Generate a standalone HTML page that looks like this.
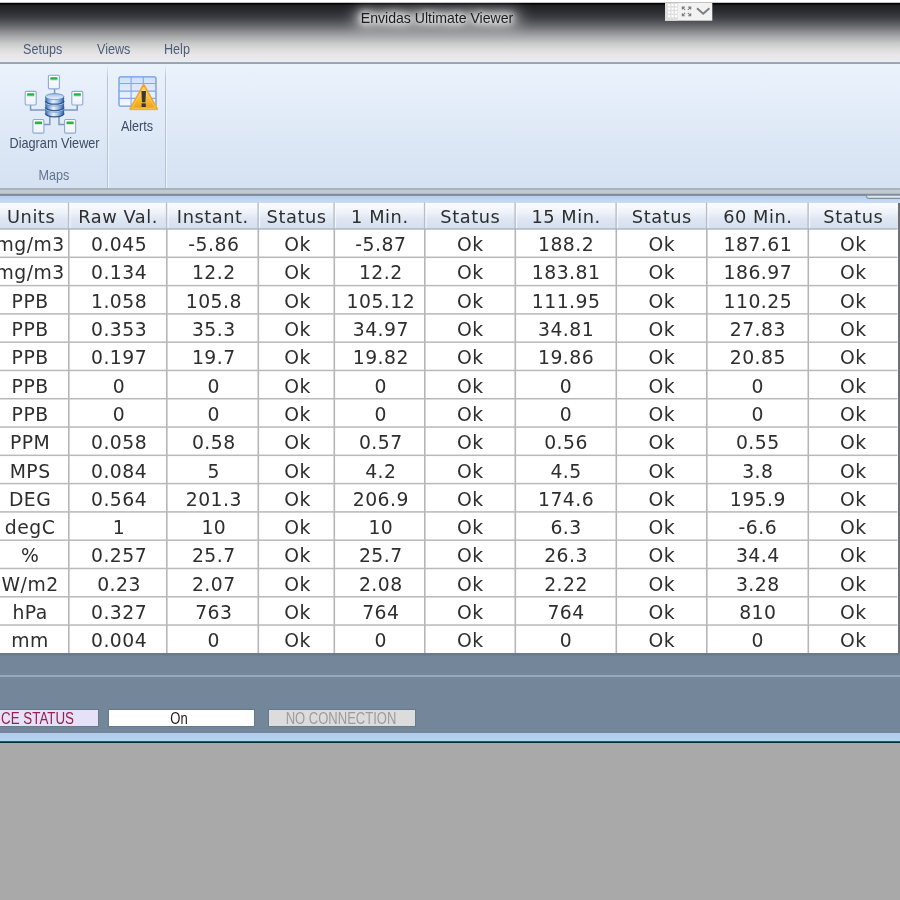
<!DOCTYPE html>
<html><head><meta charset="utf-8"><title>Envidas Ultimate Viewer</title>
<style>
html,body{margin:0;padding:0;}
body{width:900px;height:900px;overflow:hidden;position:relative;background:#a9a9a9;font-family:"Liberation Sans",sans-serif;}
.abs{position:absolute;}
.soft{filter:blur(.45px);}
#title{left:0;top:0;width:900px;height:62px;background:linear-gradient(to bottom,#ffffff 0px,#ffffff 2.4px,#050505 2.8px,#050505 4px,#1f2125 5.5px,#2a2c30 11px,#383b40 16.7px,#4b4e52 21px,#6a6c70 26.5px,#8a8c8e 31.5px,#a9aaab 37px,#c6c7c7 43px,#dadbdb 49px,#e7e6e9 55px,#ebeaee 62px);}
#ttext{left:337px;top:9px;width:200px;text-align:center;font-size:14.1px;line-height:18px;color:#1c1c1c;white-space:nowrap;text-shadow:0 0 5px rgba(255,255,255,.9),0 0 8px rgba(255,255,255,.85),0 0 10px rgba(255,255,255,.8),0 0 12px rgba(255,255,255,.7),0 0 14px rgba(255,255,255,.6);}
.menu{top:40.6px;font-size:14.4px;line-height:16px;color:#4c5b78;white-space:nowrap;transform-origin:0 0;transform:scaleX(.875);}
#ribbon{left:0;top:62px;width:900px;height:126px;background:linear-gradient(to bottom,#eeeef0 0,#9aa9ba .5px,#94a4b6 1.7px,#eaf2fc 2.4px,#e4edf9 40px,#d9e5f4 100px,#d5e2f2 126px);}
.rl{font-size:14.6px;line-height:16px;color:#3d4b66;white-space:nowrap;text-align:center;transform:scaleX(.864);margin-top:-.7px}
.sep{top:64px;height:124px;width:1px;background:linear-gradient(to bottom,rgba(182,195,212,0),#b6c3d4 14px);}
.seph{top:64px;height:124px;width:1px;background:linear-gradient(to bottom,rgba(238,244,252,0),#eef4fc 14px);}
#band1{left:0;top:187.7px;width:900px;height:8px;background:linear-gradient(to bottom,#a9b2bd 0,#a9b2bd 2px,#c3c9d1 2.3px,#c3c9d1 5.4px,#7f8e9d 5.8px,#7f8e9d 8px);}
#band2{left:0;top:195.7px;width:900px;height:7px;background:linear-gradient(to bottom,#b7cfed,#c9dcf3);}
#thead{left:0;top:202.5px;width:897.5px;height:26.7px;background:linear-gradient(to bottom,#fafcfe 0,#eef3fa 35%,#dfe7f3 60%,#d3deee 100%);}
#tbody{left:0;top:229.0px;width:897.5px;height:424.4px;background:#fff;}
.c{position:absolute;text-align:center;font-family:"DejaVu Sans","Liberation Sans",sans-serif;font-size:18.8px;letter-spacing:.5px;line-height:28.29px;height:28.29px;color:#2e2e2e;white-space:nowrap;}
.h{position:absolute;text-align:center;font-family:"DejaVu Sans","Liberation Sans",sans-serif;font-size:17.8px;letter-spacing:.55px;line-height:26.7px;height:26.7px;color:#2e2e2e;white-space:nowrap;}
.vl{position:absolute;width:1.2px;background:#b9b9b9;}
.hl{position:absolute;left:0;width:897.5px;height:1.2px;background:#c4c4c4;}
#status{left:0;top:653.2px;width:900px;height:79.8px;background:linear-gradient(to bottom,#6a7a8b 0,#6a7a8b 2.3px,#74879a 2.8px);}
#sline{left:0;top:675.2px;width:900px;height:1.4px;background:#9aabbb;}
.sb{top:709.9px;height:15.8px;box-shadow:0 0 0 1px #677a8d;}
.st{top:708.6px;font-size:16.3px;line-height:18px;white-space:nowrap;}
#band3{left:0;top:733px;width:900px;height:7.9px;background:linear-gradient(to bottom,#b5cbeb,#aed6ef);}
#band4{left:0;top:740.7px;width:900px;height:2px;background:linear-gradient(to bottom,#1b7f90,#06303c 60%,#0a2a30);}
</style></head><body>

<div id="title" class="abs"></div>
<div class="abs" style="left:352px;top:8px;width:170px;height:20px;border-radius:10px;background:rgba(255,255,255,.38);filter:blur(7px)"></div>
<div id="ttext" class="abs soft">Envidas Ultimate Viewer</div>
<svg class="abs" style="left:665px;top:2.6px" width="48" height="18" viewBox="0 0 48 18">
<rect x="0" y="0" width="47.3" height="17.7" fill="#f2f2f2"/>
<rect x="0" y="0" width="12.8" height="17.7" fill="#dedede"/>
<g fill="#ffffff">
<rect x="3.0" y="1.0" width="2.2" height="2.2"/>
<rect x="3.0" y="4.6" width="2.2" height="2.2"/>
<rect x="3.0" y="8.3" width="2.2" height="2.2"/>
<rect x="3.0" y="12.1" width="2.2" height="2.2"/>
<rect x="6.5" y="1.0" width="2.2" height="2.2"/>
<rect x="6.5" y="4.6" width="2.2" height="2.2"/>
<rect x="6.5" y="8.3" width="2.2" height="2.2"/>
<rect x="6.5" y="12.1" width="2.2" height="2.2"/>
<rect x="9.9" y="1.0" width="2.2" height="2.2"/>
<rect x="9.9" y="4.6" width="2.2" height="2.2"/>
<rect x="9.9" y="8.3" width="2.2" height="2.2"/>
<rect x="9.9" y="12.1" width="2.2" height="2.2"/>
</g>
<g stroke="#7a7a7a" stroke-width="1.05" fill="none">
<path d="M20.2 7.0 L17.5 4.3 M17.3 6.6 V4.1 H19.8"/>
<path d="M22.8 7.0 L25.5 4.3 M25.7 6.6 V4.1 H23.2"/>
<path d="M20.2 9.8 L17.5 12.5 M17.3 10.2 V12.7 H19.8"/>
<path d="M22.8 9.8 L25.5 12.5 M25.7 10.2 V12.7 H23.2"/>
</g>
<path d="M32 5.2 L38.2 10.8 L44.4 5.2" stroke="#7d7d7d" stroke-width="1.9" fill="none"/>
</svg>
<div class="abs menu soft" style="left:22.5px">Setups</div>
<div class="abs menu soft" style="left:96.5px">Views</div>
<div class="abs menu soft" style="left:164px">Help</div>
<div id="ribbon" class="abs"></div>
<div class="abs sep" style="left:107px"></div><div class="abs seph" style="left:108px"></div>
<div class="abs sep" style="left:165px"></div><div class="abs seph" style="left:166px"></div>
<svg class="abs soft" style="left:0;top:62px" width="200" height="126" viewBox="0 62 200 126">
<defs>
<linearGradient id="dg" x1="0" x2="0" y1="0" y2="1"><stop offset="0" stop-color="#ffffff"/><stop offset="1" stop-color="#edf2f8"/></linearGradient>
<linearGradient id="cy" x1="0" x2="1" y1="0" y2="0"><stop offset="0" stop-color="#2f5f9f"/><stop offset=".14" stop-color="#6d99d2"/><stop offset=".42" stop-color="#e9f2fc"/><stop offset=".62" stop-color="#b4cfee"/><stop offset=".86" stop-color="#5b89c6"/><stop offset="1" stop-color="#2a5590"/></linearGradient>
<linearGradient id="cyt" x1="0" x2="0" y1="0" y2="1"><stop offset="0" stop-color="#9cbde6"/><stop offset="1" stop-color="#f2f7fd"/></linearGradient>
<linearGradient id="tri" x1="0" x2="0" y1="0" y2="1"><stop offset="0" stop-color="#fbe08a"/><stop offset=".45" stop-color="#f9c445"/><stop offset="1" stop-color="#eea016"/></linearGradient>
<linearGradient id="cell" x1="0" x2="0" y1="0" y2="1"><stop offset="0" stop-color="#cfe0f8"/><stop offset="1" stop-color="#f4f9ff"/></linearGradient>
</defs>
<g stroke="#7b98bf" stroke-width="1.5" fill="none"><path d="M54.6 89 V95"/><path d="M30.6 105 V110 H46"/><path d="M77.2 105 V110 H63"/><path d="M49.8 116 V124.4 H44"/><path d="M59.0 116 V124.4 H64.4"/></g>
<rect x="48.4" y="75.3" width="11" height="13.6" rx="1.2" fill="url(#dg)" stroke="#8ea9cf" stroke-width="1.1"/><rect x="50.3" y="77.2" width="7.2" height="2.5" rx=".5" fill="#2db045"/><rect x="50.3" y="79.9" width="7.2" height=".9" fill="#c9ecce"/><rect x="25.2" y="91.4" width="11" height="13.6" rx="1.2" fill="url(#dg)" stroke="#8ea9cf" stroke-width="1.1"/><rect x="27.1" y="93.3" width="7.2" height="2.5" rx=".5" fill="#2db045"/><rect x="27.1" y="96.0" width="7.2" height=".9" fill="#c9ecce"/><rect x="71.8" y="91.4" width="11" height="13.6" rx="1.2" fill="url(#dg)" stroke="#8ea9cf" stroke-width="1.1"/><rect x="73.7" y="93.3" width="7.2" height="2.5" rx=".5" fill="#2db045"/><rect x="73.7" y="96.0" width="7.2" height=".9" fill="#c9ecce"/><rect x="32.9" y="119.5" width="11" height="13.6" rx="1.2" fill="url(#dg)" stroke="#8ea9cf" stroke-width="1.1"/><rect x="34.8" y="121.4" width="7.2" height="2.5" rx=".5" fill="#2db045"/><rect x="34.8" y="124.1" width="7.2" height=".9" fill="#c9ecce"/><rect x="64.6" y="119.5" width="11" height="13.6" rx="1.2" fill="url(#dg)" stroke="#8ea9cf" stroke-width="1.1"/><rect x="66.5" y="121.4" width="7.2" height="2.5" rx=".5" fill="#2db045"/><rect x="66.5" y="124.1" width="7.2" height=".9" fill="#c9ecce"/>
<path d="M45.3 109.2 V113.8 A9.4 3.2 0 0 0 64.1 113.8 V109.2 Z" fill="url(#cy)"/>
<path d="M45.3 113.6 A9.4 3.2 0 0 0 64.1 113.6" fill="none" stroke="#234a82" stroke-width="1.3" opacity=".9"/>
<ellipse cx="54.7" cy="109.2" rx="9.1" ry="3.0" fill="url(#cyt)" stroke="#5582be" stroke-width=".7"/>
<path d="M45.3 103.0 V107.6 A9.4 3.2 0 0 0 64.1 107.6 V103.0 Z" fill="url(#cy)"/>
<path d="M45.3 107.4 A9.4 3.2 0 0 0 64.1 107.4" fill="none" stroke="#234a82" stroke-width="1.3" opacity=".9"/>
<ellipse cx="54.7" cy="103.0" rx="9.1" ry="3.0" fill="url(#cyt)" stroke="#5582be" stroke-width=".7"/>
<path d="M45.3 96.6 V101.2 A9.4 3.2 0 0 0 64.1 101.2 V96.6 Z" fill="url(#cy)"/>
<path d="M45.3 101.0 A9.4 3.2 0 0 0 64.1 101.0" fill="none" stroke="#234a82" stroke-width="1.3" opacity=".9"/>
<ellipse cx="54.7" cy="96.6" rx="9.1" ry="3.0" fill="url(#cyt)" stroke="#5582be" stroke-width=".7"/>
<rect x="119" y="76.8" width="37" height="29.4" rx="1.5" fill="url(#cell)" stroke="#6c9be0" stroke-width="1.3"/>
<g stroke="#7fa8e6" stroke-width="1.1"><path d="M131.1 76.8 V106.2 M143.3 76.8 V106.2 M119 83.5 H156 M119 91.1 H156 M119 98.4 H156"/></g>
<path d="M142.6 85.2 Q143.7 83.4 144.8 85.2 L157.6 108.4 Q158.2 109.8 156.8 109.8 H130.6 Q129.2 109.8 129.8 108.4 Z" fill="#f0a01c" stroke="#f2a82e" stroke-width=".6" stroke-linejoin="round"/>
<path d="M143.7 87 L155.6 108.2 H131.8 Z" fill="url(#tri)" stroke="#fbd36a" stroke-width=".8" stroke-linejoin="round"/>
<path d="M141.4 91 H146 L145.4 102.2 H142 Z" fill="#3b3733"/><rect x="141.6" y="103.4" width="4.2" height="3.6" fill="#3b3733"/>
</svg>
<div class="abs rl soft" style="left:3.4px;top:136px;width:100px;transform:scaleX(.87)">Diagram Viewer</div>
<div class="abs rl soft" style="left:107px;top:118.5px;width:60px">Alerts</div>
<div class="abs rl soft" style="left:24px;top:167.5px;width:60px;color:#62748f">Maps</div>
<div id="band1" class="abs"></div><div id="band2" class="abs"></div>
<svg class="abs" style="left:860px;top:190px" width="40" height="14" viewBox="860 190 40 14"><path d="M866.6 195.7 V196.6 Q866.6 198.4 868.6 198.4 H900 V195.7 Z" fill="#dfe7f1"/><path d="M866.6 195.7 V196.6 Q866.6 198.4 868.6 198.4 H900" fill="none" stroke="#8190a1" stroke-width="1.1"/></svg>
<div class="abs" style="left:897.3px;top:202.6px;width:2.7px;height:451px;background:linear-gradient(to right,#f3f6fa 0,#f3f6fa 1.2px,#6e7074 1.5px)"></div>
<div id="thead" class="abs"></div><div id="tbody" class="abs"></div>
<div class="abs soft" style="left:0;top:0;width:900px;height:900px">
<div class="h" style="left:-6.9px;top:203.7px;width:76.0px">Units</div>
<div class="h" style="left:69.1px;top:203.7px;width:98.0px">Raw Val.</div>
<div class="h" style="left:167.1px;top:203.7px;width:91.5px">Instant.</div>
<div class="h" style="left:258.6px;top:203.7px;width:76.0px">Status</div>
<div class="h" style="left:334.6px;top:203.7px;width:90.5px">1 Min.</div>
<div class="h" style="left:425.1px;top:203.7px;width:90.5px">Status</div>
<div class="h" style="left:515.6px;top:203.7px;width:101.0px">15 Min.</div>
<div class="h" style="left:616.6px;top:203.7px;width:90.5px">Status</div>
<div class="h" style="left:707.1px;top:203.7px;width:101.5px">60 Min.</div>
<div class="h" style="left:808.6px;top:203.7px;width:89.5px">Status</div>
<div class="c" style="left:-7.9px;top:231.20px;width:76.0px">mg/m3</div>
<div class="c" style="left:70.1px;top:231.20px;width:98.0px">0.045</div>
<div class="c" style="left:168.1px;top:231.20px;width:91.5px">-5.86</div>
<div class="c" style="left:259.6px;top:231.20px;width:76.0px">Ok</div>
<div class="c" style="left:335.6px;top:231.20px;width:90.5px">-5.87</div>
<div class="c" style="left:425.1px;top:231.20px;width:90.5px">Ok</div>
<div class="c" style="left:515.6px;top:231.20px;width:101.0px">188.2</div>
<div class="c" style="left:616.6px;top:231.20px;width:90.5px">Ok</div>
<div class="c" style="left:707.1px;top:231.20px;width:101.5px">187.61</div>
<div class="c" style="left:808.6px;top:231.20px;width:89.5px">Ok</div>
<div class="c" style="left:-7.9px;top:259.49px;width:76.0px">mg/m3</div>
<div class="c" style="left:70.1px;top:259.49px;width:98.0px">0.134</div>
<div class="c" style="left:168.1px;top:259.49px;width:91.5px">12.2</div>
<div class="c" style="left:259.6px;top:259.49px;width:76.0px">Ok</div>
<div class="c" style="left:335.6px;top:259.49px;width:90.5px">12.2</div>
<div class="c" style="left:425.1px;top:259.49px;width:90.5px">Ok</div>
<div class="c" style="left:515.6px;top:259.49px;width:101.0px">183.81</div>
<div class="c" style="left:616.6px;top:259.49px;width:90.5px">Ok</div>
<div class="c" style="left:707.1px;top:259.49px;width:101.5px">186.97</div>
<div class="c" style="left:808.6px;top:259.49px;width:89.5px">Ok</div>
<div class="c" style="left:-7.9px;top:287.78px;width:76.0px">PPB</div>
<div class="c" style="left:70.1px;top:287.78px;width:98.0px">1.058</div>
<div class="c" style="left:168.1px;top:287.78px;width:91.5px">105.8</div>
<div class="c" style="left:259.6px;top:287.78px;width:76.0px">Ok</div>
<div class="c" style="left:335.6px;top:287.78px;width:90.5px">105.12</div>
<div class="c" style="left:425.1px;top:287.78px;width:90.5px">Ok</div>
<div class="c" style="left:515.6px;top:287.78px;width:101.0px">111.95</div>
<div class="c" style="left:616.6px;top:287.78px;width:90.5px">Ok</div>
<div class="c" style="left:707.1px;top:287.78px;width:101.5px">110.25</div>
<div class="c" style="left:808.6px;top:287.78px;width:89.5px">Ok</div>
<div class="c" style="left:-7.9px;top:316.07px;width:76.0px">PPB</div>
<div class="c" style="left:70.1px;top:316.07px;width:98.0px">0.353</div>
<div class="c" style="left:168.1px;top:316.07px;width:91.5px">35.3</div>
<div class="c" style="left:259.6px;top:316.07px;width:76.0px">Ok</div>
<div class="c" style="left:335.6px;top:316.07px;width:90.5px">34.97</div>
<div class="c" style="left:425.1px;top:316.07px;width:90.5px">Ok</div>
<div class="c" style="left:515.6px;top:316.07px;width:101.0px">34.81</div>
<div class="c" style="left:616.6px;top:316.07px;width:90.5px">Ok</div>
<div class="c" style="left:707.1px;top:316.07px;width:101.5px">27.83</div>
<div class="c" style="left:808.6px;top:316.07px;width:89.5px">Ok</div>
<div class="c" style="left:-7.9px;top:344.36px;width:76.0px">PPB</div>
<div class="c" style="left:70.1px;top:344.36px;width:98.0px">0.197</div>
<div class="c" style="left:168.1px;top:344.36px;width:91.5px">19.7</div>
<div class="c" style="left:259.6px;top:344.36px;width:76.0px">Ok</div>
<div class="c" style="left:335.6px;top:344.36px;width:90.5px">19.82</div>
<div class="c" style="left:425.1px;top:344.36px;width:90.5px">Ok</div>
<div class="c" style="left:515.6px;top:344.36px;width:101.0px">19.86</div>
<div class="c" style="left:616.6px;top:344.36px;width:90.5px">Ok</div>
<div class="c" style="left:707.1px;top:344.36px;width:101.5px">20.85</div>
<div class="c" style="left:808.6px;top:344.36px;width:89.5px">Ok</div>
<div class="c" style="left:-7.9px;top:372.65px;width:76.0px">PPB</div>
<div class="c" style="left:70.1px;top:372.65px;width:98.0px">0</div>
<div class="c" style="left:168.1px;top:372.65px;width:91.5px">0</div>
<div class="c" style="left:259.6px;top:372.65px;width:76.0px">Ok</div>
<div class="c" style="left:335.6px;top:372.65px;width:90.5px">0</div>
<div class="c" style="left:425.1px;top:372.65px;width:90.5px">Ok</div>
<div class="c" style="left:515.6px;top:372.65px;width:101.0px">0</div>
<div class="c" style="left:616.6px;top:372.65px;width:90.5px">Ok</div>
<div class="c" style="left:707.1px;top:372.65px;width:101.5px">0</div>
<div class="c" style="left:808.6px;top:372.65px;width:89.5px">Ok</div>
<div class="c" style="left:-7.9px;top:400.94px;width:76.0px">PPB</div>
<div class="c" style="left:70.1px;top:400.94px;width:98.0px">0</div>
<div class="c" style="left:168.1px;top:400.94px;width:91.5px">0</div>
<div class="c" style="left:259.6px;top:400.94px;width:76.0px">Ok</div>
<div class="c" style="left:335.6px;top:400.94px;width:90.5px">0</div>
<div class="c" style="left:425.1px;top:400.94px;width:90.5px">Ok</div>
<div class="c" style="left:515.6px;top:400.94px;width:101.0px">0</div>
<div class="c" style="left:616.6px;top:400.94px;width:90.5px">Ok</div>
<div class="c" style="left:707.1px;top:400.94px;width:101.5px">0</div>
<div class="c" style="left:808.6px;top:400.94px;width:89.5px">Ok</div>
<div class="c" style="left:-7.9px;top:429.23px;width:76.0px">PPM</div>
<div class="c" style="left:70.1px;top:429.23px;width:98.0px">0.058</div>
<div class="c" style="left:168.1px;top:429.23px;width:91.5px">0.58</div>
<div class="c" style="left:259.6px;top:429.23px;width:76.0px">Ok</div>
<div class="c" style="left:335.6px;top:429.23px;width:90.5px">0.57</div>
<div class="c" style="left:425.1px;top:429.23px;width:90.5px">Ok</div>
<div class="c" style="left:515.6px;top:429.23px;width:101.0px">0.56</div>
<div class="c" style="left:616.6px;top:429.23px;width:90.5px">Ok</div>
<div class="c" style="left:707.1px;top:429.23px;width:101.5px">0.55</div>
<div class="c" style="left:808.6px;top:429.23px;width:89.5px">Ok</div>
<div class="c" style="left:-7.9px;top:457.52px;width:76.0px">MPS</div>
<div class="c" style="left:70.1px;top:457.52px;width:98.0px">0.084</div>
<div class="c" style="left:168.1px;top:457.52px;width:91.5px">5</div>
<div class="c" style="left:259.6px;top:457.52px;width:76.0px">Ok</div>
<div class="c" style="left:335.6px;top:457.52px;width:90.5px">4.2</div>
<div class="c" style="left:425.1px;top:457.52px;width:90.5px">Ok</div>
<div class="c" style="left:515.6px;top:457.52px;width:101.0px">4.5</div>
<div class="c" style="left:616.6px;top:457.52px;width:90.5px">Ok</div>
<div class="c" style="left:707.1px;top:457.52px;width:101.5px">3.8</div>
<div class="c" style="left:808.6px;top:457.52px;width:89.5px">Ok</div>
<div class="c" style="left:-7.9px;top:485.81px;width:76.0px">DEG</div>
<div class="c" style="left:70.1px;top:485.81px;width:98.0px">0.564</div>
<div class="c" style="left:168.1px;top:485.81px;width:91.5px">201.3</div>
<div class="c" style="left:259.6px;top:485.81px;width:76.0px">Ok</div>
<div class="c" style="left:335.6px;top:485.81px;width:90.5px">206.9</div>
<div class="c" style="left:425.1px;top:485.81px;width:90.5px">Ok</div>
<div class="c" style="left:515.6px;top:485.81px;width:101.0px">174.6</div>
<div class="c" style="left:616.6px;top:485.81px;width:90.5px">Ok</div>
<div class="c" style="left:707.1px;top:485.81px;width:101.5px">195.9</div>
<div class="c" style="left:808.6px;top:485.81px;width:89.5px">Ok</div>
<div class="c" style="left:-7.9px;top:514.10px;width:76.0px">degC</div>
<div class="c" style="left:70.1px;top:514.10px;width:98.0px">1</div>
<div class="c" style="left:168.1px;top:514.10px;width:91.5px">10</div>
<div class="c" style="left:259.6px;top:514.10px;width:76.0px">Ok</div>
<div class="c" style="left:335.6px;top:514.10px;width:90.5px">10</div>
<div class="c" style="left:425.1px;top:514.10px;width:90.5px">Ok</div>
<div class="c" style="left:515.6px;top:514.10px;width:101.0px">6.3</div>
<div class="c" style="left:616.6px;top:514.10px;width:90.5px">Ok</div>
<div class="c" style="left:707.1px;top:514.10px;width:101.5px">-6.6</div>
<div class="c" style="left:808.6px;top:514.10px;width:89.5px">Ok</div>
<div class="c" style="left:-7.9px;top:542.39px;width:76.0px">%</div>
<div class="c" style="left:70.1px;top:542.39px;width:98.0px">0.257</div>
<div class="c" style="left:168.1px;top:542.39px;width:91.5px">25.7</div>
<div class="c" style="left:259.6px;top:542.39px;width:76.0px">Ok</div>
<div class="c" style="left:335.6px;top:542.39px;width:90.5px">25.7</div>
<div class="c" style="left:425.1px;top:542.39px;width:90.5px">Ok</div>
<div class="c" style="left:515.6px;top:542.39px;width:101.0px">26.3</div>
<div class="c" style="left:616.6px;top:542.39px;width:90.5px">Ok</div>
<div class="c" style="left:707.1px;top:542.39px;width:101.5px">34.4</div>
<div class="c" style="left:808.6px;top:542.39px;width:89.5px">Ok</div>
<div class="c" style="left:-7.9px;top:570.68px;width:76.0px">W/m2</div>
<div class="c" style="left:70.1px;top:570.68px;width:98.0px">0.23</div>
<div class="c" style="left:168.1px;top:570.68px;width:91.5px">2.07</div>
<div class="c" style="left:259.6px;top:570.68px;width:76.0px">Ok</div>
<div class="c" style="left:335.6px;top:570.68px;width:90.5px">2.08</div>
<div class="c" style="left:425.1px;top:570.68px;width:90.5px">Ok</div>
<div class="c" style="left:515.6px;top:570.68px;width:101.0px">2.22</div>
<div class="c" style="left:616.6px;top:570.68px;width:90.5px">Ok</div>
<div class="c" style="left:707.1px;top:570.68px;width:101.5px">3.28</div>
<div class="c" style="left:808.6px;top:570.68px;width:89.5px">Ok</div>
<div class="c" style="left:-7.9px;top:598.97px;width:76.0px">hPa</div>
<div class="c" style="left:70.1px;top:598.97px;width:98.0px">0.327</div>
<div class="c" style="left:168.1px;top:598.97px;width:91.5px">763</div>
<div class="c" style="left:259.6px;top:598.97px;width:76.0px">Ok</div>
<div class="c" style="left:335.6px;top:598.97px;width:90.5px">764</div>
<div class="c" style="left:425.1px;top:598.97px;width:90.5px">Ok</div>
<div class="c" style="left:515.6px;top:598.97px;width:101.0px">764</div>
<div class="c" style="left:616.6px;top:598.97px;width:90.5px">Ok</div>
<div class="c" style="left:707.1px;top:598.97px;width:101.5px">810</div>
<div class="c" style="left:808.6px;top:598.97px;width:89.5px">Ok</div>
<div class="c" style="left:-7.9px;top:627.26px;width:76.0px">mm</div>
<div class="c" style="left:70.1px;top:627.26px;width:98.0px">0.004</div>
<div class="c" style="left:168.1px;top:627.26px;width:91.5px">0</div>
<div class="c" style="left:259.6px;top:627.26px;width:76.0px">Ok</div>
<div class="c" style="left:335.6px;top:627.26px;width:90.5px">0</div>
<div class="c" style="left:425.1px;top:627.26px;width:90.5px">Ok</div>
<div class="c" style="left:515.6px;top:627.26px;width:101.0px">0</div>
<div class="c" style="left:616.6px;top:627.26px;width:90.5px">Ok</div>
<div class="c" style="left:707.1px;top:627.26px;width:101.5px">0</div>
<div class="c" style="left:808.6px;top:627.26px;width:89.5px">Ok</div>
</div>
<svg class="abs" style="left:0;top:0" width="900" height="900" viewBox="0 0 900 900">
<g fill="#b6b6b6">
<rect x="68.00" y="229.0" width="1.6" height="424.35"/>
<rect x="166.00" y="229.0" width="1.6" height="424.35"/>
<rect x="257.50" y="229.0" width="1.6" height="424.35"/>
<rect x="333.50" y="229.0" width="1.6" height="424.35"/>
<rect x="424.00" y="229.0" width="1.6" height="424.35"/>
<rect x="514.50" y="229.0" width="1.6" height="424.35"/>
<rect x="615.50" y="229.0" width="1.6" height="424.35"/>
<rect x="706.00" y="229.0" width="1.6" height="424.35"/>
<rect x="807.50" y="229.0" width="1.6" height="424.35"/>
</g>
<g fill="#b4bfce">
<rect x="67.90" y="202.5" width="1.5" height="26.50"/>
<rect x="165.90" y="202.5" width="1.5" height="26.50"/>
<rect x="257.40" y="202.5" width="1.5" height="26.50"/>
<rect x="333.40" y="202.5" width="1.5" height="26.50"/>
<rect x="423.90" y="202.5" width="1.5" height="26.50"/>
<rect x="514.40" y="202.5" width="1.5" height="26.50"/>
<rect x="615.40" y="202.5" width="1.5" height="26.50"/>
<rect x="705.90" y="202.5" width="1.5" height="26.50"/>
<rect x="807.40" y="202.5" width="1.5" height="26.50"/>
</g>
<g fill="#ffffff" opacity=".7">
<rect x="69.40" y="202.5" width="1.2" height="25.80"/>
<rect x="167.40" y="202.5" width="1.2" height="25.80"/>
<rect x="258.90" y="202.5" width="1.2" height="25.80"/>
<rect x="334.90" y="202.5" width="1.2" height="25.80"/>
<rect x="425.40" y="202.5" width="1.2" height="25.80"/>
<rect x="515.90" y="202.5" width="1.2" height="25.80"/>
<rect x="616.90" y="202.5" width="1.2" height="25.80"/>
<rect x="707.40" y="202.5" width="1.2" height="25.80"/>
<rect x="808.90" y="202.5" width="1.2" height="25.80"/>
</g>
<rect x="0" y="228.30" width="897.5" height="1.4" fill="#a9b6c5"/>
<g fill="#b9b9b9">
<rect x="0" y="256.54" width="897.5" height="1.5"/>
<rect x="0" y="284.83" width="897.5" height="1.5"/>
<rect x="0" y="313.12" width="897.5" height="1.5"/>
<rect x="0" y="341.41" width="897.5" height="1.5"/>
<rect x="0" y="369.70" width="897.5" height="1.5"/>
<rect x="0" y="397.99" width="897.5" height="1.5"/>
<rect x="0" y="426.28" width="897.5" height="1.5"/>
<rect x="0" y="454.57" width="897.5" height="1.5"/>
<rect x="0" y="482.86" width="897.5" height="1.5"/>
<rect x="0" y="511.15" width="897.5" height="1.5"/>
<rect x="0" y="539.44" width="897.5" height="1.5"/>
<rect x="0" y="567.73" width="897.5" height="1.5"/>
<rect x="0" y="596.02" width="897.5" height="1.5"/>
<rect x="0" y="624.31" width="897.5" height="1.5"/>
</g></svg>
<div id="status" class="abs"></div><div id="sline" class="abs"></div>
<div class="abs sb" style="left:-40px;width:138.1px;background:#e5e1f9;"></div>
<div class="abs st soft" style="left:-125.9px;width:200px;text-align:right;color:#98204a;transform-origin:100% 50%;transform:scaleX(.82)">SERVICE STATUS</div>
<div class="abs sb" style="left:108.7px;width:145.2px;background:#fff;"></div>
<div class="abs st soft" style="left:129.4px;width:100px;text-align:center;color:#1c1c1c;transform:scaleX(.8)">On</div>
<div class="abs sb" style="left:269px;width:146.2px;background:#dcdcdc;"></div>
<div class="abs st soft" style="left:241.1px;width:200px;text-align:center;color:#9c9c9c;transform:scaleX(.8)">NO CONNECTION</div>
<div id="band3" class="abs"></div><div id="band4" class="abs"></div>
</body></html>
